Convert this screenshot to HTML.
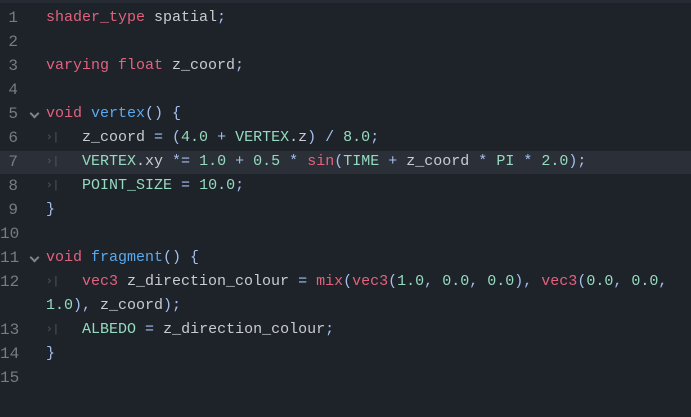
<!DOCTYPE html><html><head><style>
body{margin:0;width:691px;height:417px;background:#1e2229;overflow:hidden;font-family:"Liberation Mono","DejaVu Sans Mono",monospace;font-size:15px;}
.top{position:absolute;left:0;top:0;width:691px;height:3px;background:#262b33}
.hl{position:absolute;left:0;top:151px;width:691px;height:23px;background:#2b2f37}
.l{position:absolute;left:46px;top:0;height:24px;line-height:24px;white-space:pre;color:#c8ccd2}
.n{position:absolute;left:0;width:18px;text-align:right;height:24px;line-height:24px;color:#777b82;font-size:16px}
.k{color:#e2627d}.f{color:#5aa9ee}.g{color:#95dbc0}.s{color:#a4bfee}
.t{position:absolute;left:46px;color:#555a62;font-size:11px;height:24px;line-height:24px}
.fo{position:absolute;left:28px;width:12px;height:24px}
.fo:after{content:"";position:absolute;left:3px;top:8px;width:5px;height:5px;border-right:2px solid #80848a;border-bottom:2px solid #80848a;transform:rotate(45deg)}
</style></head><body>
<div class="top"></div><div class="hl"></div>
<div class="n" style="top:6px">1</div><div class="l" style="top:6px"><span class="k">shader_type</span> spatial<span class="s">;</span></div>
<div class="n" style="top:30px">2</div>
<div class="n" style="top:54px">3</div><div class="l" style="top:54px"><span class="k">varying float</span> z_coord<span class="s">;</span></div>
<div class="n" style="top:78px">4</div>
<div class="n" style="top:102px">5</div><div class="fo" style="top:102px"></div><div class="l" style="top:102px"><span class="k">void</span> <span class="f">vertex</span><span class="s">() {</span></div>
<div class="n" style="top:126px">6</div><div class="t" style="top:126px">›|</div><div class="l" style="top:126px">    z_coord <span class="s">= (</span><span class="g">4.0</span> <span class="s">+</span> <span class="g">VERTEX</span>.z<span class="s">) /</span> <span class="g">8.0</span><span class="s">;</span></div>
<div class="n" style="top:150px">7</div><div class="t" style="top:150px">›|</div><div class="l" style="top:150px">    <span class="g">VERTEX</span>.xy <span class="s">*=</span> <span class="g">1.0</span> <span class="s">+</span> <span class="g">0.5</span> <span class="s">*</span> <span class="k">sin</span><span class="s">(</span><span class="g">TIME</span> <span class="s">+</span> z_coord <span class="s">*</span> <span class="g">PI</span> <span class="s">*</span> <span class="g">2.0</span><span class="s">);</span></div>
<div class="n" style="top:174px">8</div><div class="t" style="top:174px">›|</div><div class="l" style="top:174px">    <span class="g">POINT_SIZE</span> <span class="s">=</span> <span class="g">10.0</span><span class="s">;</span></div>
<div class="n" style="top:198px">9</div><div class="l" style="top:198px"><span class="s">}</span></div>
<div class="n" style="top:222px">10</div>
<div class="n" style="top:246px">11</div><div class="fo" style="top:246px"></div><div class="l" style="top:246px"><span class="k">void</span> <span class="f">fragment</span><span class="s">() {</span></div>
<div class="n" style="top:270px">12</div><div class="t" style="top:270px">›|</div><div class="l" style="top:270px">    <span class="k">vec3</span> z_direction_colour <span class="s">=</span> <span class="k">mix</span><span class="s">(</span><span class="k">vec3</span><span class="s">(</span><span class="g">1.0</span><span class="s">,</span> <span class="g">0.0</span><span class="s">,</span> <span class="g">0.0</span><span class="s">),</span> <span class="k">vec3</span><span class="s">(</span><span class="g">0.0</span><span class="s">,</span> <span class="g">0.0</span><span class="s">,</span></div>
<div class="l" style="top:294px"><span class="g">1.0</span><span class="s">),</span> z_coord<span class="s">);</span></div>
<div class="n" style="top:318px">13</div><div class="t" style="top:318px">›|</div><div class="l" style="top:318px">    <span class="g">ALBEDO</span> <span class="s">=</span> z_direction_colour<span class="s">;</span></div>
<div class="n" style="top:342px">14</div><div class="l" style="top:342px"><span class="s">}</span></div>
<div class="n" style="top:366px">15</div>
</body></html>
